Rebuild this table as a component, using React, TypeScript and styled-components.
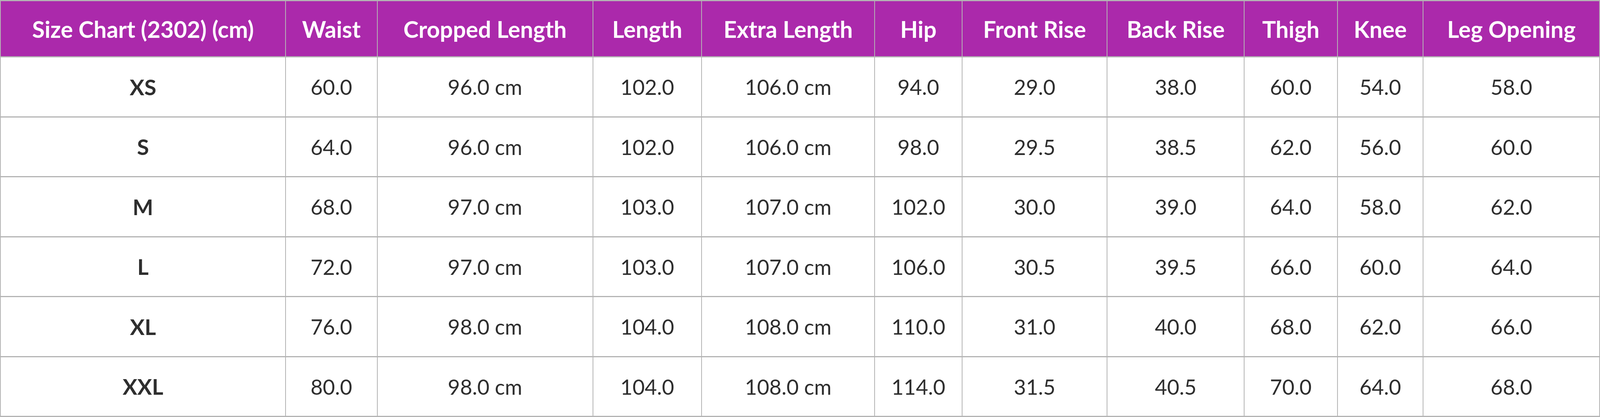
import React from "react";
import styled, { createGlobalStyle } from "styled-components";

// measured on a 4400x1068 frame, scaled to the viewport
const u = (n: number) => `calc(${n} * 100vw / 4400)`;
const v = (n: number) => `calc(${n} * 100vh / 1068)`;

const GlobalStyle = createGlobalStyle`
  html, body {
    margin: 0;
    padding: 0;
    background: #ffffff;
    overflow: hidden;
  }
  body {
    font-family: Lato, "Liberation Sans", sans-serif;
  }
`;

const Table = styled.table`
  border-collapse: separate;
  border-spacing: 0;
  table-layout: fixed;
  width: 100vw;
  height: 100vh;
  box-sizing: border-box;
  border-top: ${v(3)} solid #b4b4b4;
  border-left: ${u(3)} solid #b4b4b4;
`;

interface HeadProps {
  $width: number;
}

const HeadCell = styled.th<HeadProps>`
  box-sizing: border-box;
  width: ${(p) => u(p.$width)};
  height: ${v(144)};
  padding: 0;
  background-color: #ab29ab;
  color: #ffffff;
  font-weight: 700;
  font-size: ${u(63)};
  text-align: center;
  vertical-align: middle;
  border-right: ${u(3)} solid #b4b4b4;
  border-bottom: ${v(3)} solid #b4b4b4;
  white-space: nowrap;
  overflow: hidden;
`;

const BodyRow = styled.tr`
  height: ${v(153.5)};
`;

const Cell = styled.td<{ $bold?: boolean }>`
  box-sizing: border-box;
  padding: 0;
  background: #ffffff;
  color: #2e2e2e;
  font-size: ${(p) => (p.$bold ? u(60) : u(58))};
  font-weight: ${(p) => (p.$bold ? 700 : 400)};
  text-align: center;
  vertical-align: middle;
  border-right: ${u(3)} solid #b4b4b4;
  border-bottom: ${v(3)} solid #b4b4b4;
  white-space: nowrap;
  overflow: hidden;
`;

const columns = [
  { name: "Size Chart (2302) (cm)", width: 784 },
  { name: "Waist", width: 252 },
  { name: "Cropped Length", width: 593 },
  { name: "Length", width: 299 },
  { name: "Extra Length", width: 476 },
  { name: "Hip", width: 240 },
  { name: "Front Rise", width: 399 },
  { name: "Back Rise", width: 377 },
  { name: "Thigh", width: 256 },
  { name: "Knee", width: 236 },
  { name: "Leg Opening", width: 485 },
];

const rows = [
  ["XS", "60.0", "96.0 cm", "102.0", "106.0 cm", "94.0", "29.0", "38.0", "60.0", "54.0", "58.0"],
  ["S", "64.0", "96.0 cm", "102.0", "106.0 cm", "98.0", "29.5", "38.5", "62.0", "56.0", "60.0"],
  ["M", "68.0", "97.0 cm", "103.0", "107.0 cm", "102.0", "30.0", "39.0", "64.0", "58.0", "62.0"],
  ["L", "72.0", "97.0 cm", "103.0", "107.0 cm", "106.0", "30.5", "39.5", "66.0", "60.0", "64.0"],
  ["XL", "76.0", "98.0 cm", "104.0", "108.0 cm", "110.0", "31.0", "40.0", "68.0", "62.0", "66.0"],
  ["XXL", "80.0", "98.0 cm", "104.0", "108.0 cm", "114.0", "31.5", "40.5", "70.0", "64.0", "68.0"],
];

const App: React.FC = () => {
  return (
    <React.Fragment>
      <GlobalStyle />
      <Table>
        <thead>
          <tr>
            {columns.map((col, index) => (
              <HeadCell key={index} $width={col.width}>
                {col.name}
              </HeadCell>
            ))}
          </tr>
        </thead>
        <tbody>
          {rows.map((row, index) => (
            <BodyRow key={index}>
              {row.map((value, i) => (
                <Cell key={i} $bold={i === 0}>
                  {value}
                </Cell>
              ))}
            </BodyRow>
          ))}
        </tbody>
      </Table>
    </React.Fragment>
  );
};

export default App;
